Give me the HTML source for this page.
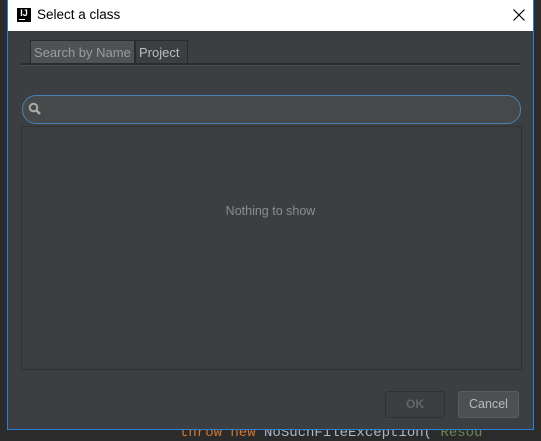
<!DOCTYPE html>
<html><head><style>
body{margin:0;width:541px;height:435px;background:#2b2b2b;position:relative;overflow:hidden;font-family:"Liberation Sans",sans-serif}
.win{position:absolute;left:7px;top:0;width:525px;height:429px;border:1px solid #2d7fd4;border-top:none;background:#3c3f41}
.title{position:absolute;left:0;top:0;width:525px;height:31px;background:#fff}
.ico{position:absolute;left:9px;top:8px;width:14px;height:14px;background:#000;color:#fff;font:bold 9px "Liberation Sans";line-height:11px;text-align:center}
.tt{position:absolute;left:29px;top:7px;font-size:13.5px;color:#000}
.tab{position:absolute;top:40px;height:24px;border:1px solid #2b2b2b;font-size:13px;color:#bbb;line-height:23px;padding:0 3px;box-sizing:border-box;white-space:nowrap}
.code{position:absolute;font:14px "Liberation Mono",monospace}
</style></head><body>
<div class="code" style="left:180px;top:425px;color:#cc7832">throw new <span style="color:#a9b7c6">NoSuchFileException(</span><span style="color:#6a8759">"Resou</span></div>
<div class="win">
<div class="title"><div class="ico">IJ<div style="width:6px;height:1px;background:#fff;margin:0 0 0 2px"></div></div><div class="tt">Select a class</div>
<svg style="position:absolute;left:505px;top:9px" width="12" height="12"><path d="M0.5 0.5L11.5 11.5M11.5 0.5L0.5 11.5" stroke="#000" stroke-width="1.2"/></svg></div>
<div class="tab" style="left:22px;width:105px;background:#4e5254;color:#9a9da0">Search by Name</div>
<div class="tab" style="left:127px;width:53px;color:#bbb">Project</div>
<div style="position:absolute;left:13px;top:63px;width:500px;height:2px;background:#2b2b2b;border-bottom:1px solid #4a4d4f"></div>
<div style="position:absolute;left:14px;top:95px;width:497px;height:27px;border:1.5px solid #4a7fb8;border-radius:14px;background:#45494a"></div>
<svg style="position:absolute;left:20px;top:102px" width="14" height="14"><circle cx="5.5" cy="5.5" r="3.8" fill="none" stroke="#aaa" stroke-width="2"/><line x1="8.5" y1="8.5" x2="12" y2="12" stroke="#aaa" stroke-width="2.5"/></svg>
<div style="position:absolute;left:13px;top:126px;width:499px;height:242px;border:1px solid #2f3133;background:#3c3f41"></div>
<div style="position:absolute;left:0;width:525px;top:204px;text-align:center;font-size:12.5px;color:#8c8c8c">Nothing to show</div>
<div style="position:absolute;left:377px;top:391px;width:58px;height:25px;border:1px solid #2f3133;border-radius:3px;font:bold 12px 'Liberation Sans';color:#666;text-align:center;line-height:25px">OK</div>
<div style="position:absolute;left:450px;top:391px;width:59px;height:25px;border:1px solid #5a5d5f;border-radius:3px;background:#4c5052;font-size:12.5px;color:#bbb;text-align:center;line-height:25px">Cancel</div>
</div>
</body></html>
